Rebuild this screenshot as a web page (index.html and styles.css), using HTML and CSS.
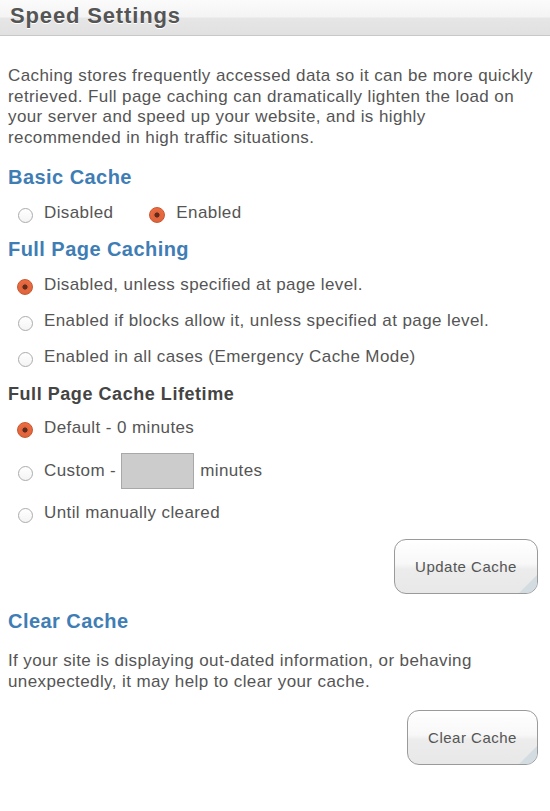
FILE: index.html
```html
<!DOCTYPE html>
<html>
<head>
<meta charset="utf-8">
<link rel="stylesheet" href="styles.css">
</head>
<body>
<div class="header"><h1 class="title">Speed Settings</h1></div>
<div class="content">
  <p class="intro">Caching stores frequently accessed data so it can be more quickly retrieved. Full page caching can dramatically lighten the load on your server and speed up your website, and is highly recommended in high traffic situations.</p>

  <h2 class="section">Basic Cache</h2>
  <div class="inline-row">
    <label class="opt"><span class="radio"></span>Disabled</label>
    <label class="opt"><span class="radio checked"></span>Enabled</label>
  </div>

  <h2 class="section">Full Page Caching</h2>
  <div class="stack">
    <label class="opt"><span class="radio checked"></span>Disabled, unless specified at page level.</label>
    <label class="opt"><span class="radio"></span>Enabled if blocks allow it, unless specified at page level.</label>
    <label class="opt"><span class="radio"></span>Enabled in all cases (Emergency Cache Mode)</label>
  </div>

  <h3 class="sub">Full Page Cache Lifetime</h3>
  <div class="stack lifetime">
    <label class="opt"><span class="radio checked"></span>Default - 0 minutes</label>
    <label class="opt custom"><span class="radio"></span>Custom -<span class="box"></span>minutes</label>
    <label class="opt"><span class="radio"></span>Until manually cleared</label>
  </div>

  <div class="actions first"><button class="btn update">Update Cache</button></div>

  <h2 class="section clear-head">Clear Cache</h2>
  <p class="note">If your site is displaying out-dated information, or behaving unexpectedly, it may help to clear your cache.</p>
  <div class="actions"><button class="btn clear">Clear Cache</button></div>
</div>
</body>
</html>
```
FILE: styles.css
```css
html, body {
  margin: 0;
  padding: 0;
  background: #fff;
}
body {
  font-family: "Liberation Sans", Arial, sans-serif;
  color: #555;
  width: 550px;
}
.header {
  box-sizing: border-box;
  height: 36px;
  border-bottom: 1px solid #c8c8c8;
  background: linear-gradient(to bottom, #fbfbfb 0%, #f4f4f4 48%, #e6e6e6 52%, #e1e1e1 100%);
  display: flex;
  align-items: flex-start;
  padding: 3px 0 0 10px;
}
.title {
  margin: 0;
  font-size: 22px;
  font-weight: bold;
  color: #555;
  line-height: 26px;
  letter-spacing: 0.85px;
  text-shadow: 0 1px 0 #fff;
}
.content {
  padding: 0 12px 0 8px;
}
.intro {
  margin: 30px 0 0;
  font-size: 17px;
  line-height: 20.5px;
  letter-spacing: 0.4px;
}
.section {
  margin: 17px 0 0;
  font-size: 20px;
  line-height: 24px;
  font-weight: bold;
  color: #3f7db5;
  letter-spacing: 0.45px;
}
.inline-row {
  display: flex;
  gap: 37px;
  margin-top: 12px;
  padding-left: 10px;
}
.inline-row + .section {
  margin-top: 12px;
}
.opt {
  display: flex;
  align-items: center;
  gap: 11px;
  font-size: 17px;
  line-height: 24px;
  color: #555;
  letter-spacing: 0.4px;
}
.radio {
  width: 15px;
  height: 15px;
  border: 1px solid #ababab;
  border-radius: 50%;
  background: linear-gradient(to bottom, #fff, #f4f4f4);
  box-sizing: border-box;
  flex: none;
  margin-top: 4px;
}
.radio.checked {
  width: 16px;
  height: 16px;
  margin-left: -1px;
  margin-top: 3px;
  border-color: #c9562f;
  background: radial-gradient(circle at 50% 50%, #5e2c1d 0 2.2px, #e0623a 2.9px, #ee6f44 70%, #f4855c 100%);
  box-shadow: inset 0 -1px 2px rgba(0,0,0,0.12);
}
.stack {
  display: flex;
  flex-direction: column;
  gap: 12px;
  margin-top: 12px;
  padding-left: 10px;
}
.sub {
  margin: 14px 0 0;
  font-size: 18px;
  line-height: 22px;
  font-weight: bold;
  color: #444;
  letter-spacing: 0.55px;
}
.lifetime {
  margin-top: 11px;
}
.lifetime .custom {
  margin-top: 1px;
}
.box {
  display: inline-block;
  width: 71px;
  height: 34px;
  background: #cccccc;
  border: 1px solid #a8a8a8;
  margin: 0 -5px 0 -6px;
}
.custom {
  height: 36px;
}
.actions {
  display: flex;
  justify-content: flex-end;
  margin-top: 18px;
}
.actions.first {
  margin-top: 14px;
}
.btn {
  position: relative;
  overflow: hidden;
  height: 55px;
  border: 1px solid #9a9a9a;
  border-radius: 12px;
  background: linear-gradient(to bottom, #ffffff 0%, #f8f8f8 45%, #ececec 55%, #e8e8e8 100%);
  font-family: "Liberation Sans", Arial, sans-serif;
  font-size: 15px;
  letter-spacing: 0.5px;
  color: #555;
  padding: 0;
  box-shadow: 0 1px 0 #fff inset;
}
.btn::after {
  content: "";
  position: absolute;
  right: 0;
  bottom: 0;
  width: 0;
  height: 0;
  border-style: solid;
  border-width: 0 0 18px 18px;
  border-color: transparent transparent #d3dde1 transparent;
}
.update {
  width: 144px;
}
.clear {
  width: 131px;
}
.clear-head {
  margin-top: 15px;
}
.note {
  margin: 18px 0 0;
  font-size: 17px;
  line-height: 20.5px;
  letter-spacing: 0.4px;
}
```
